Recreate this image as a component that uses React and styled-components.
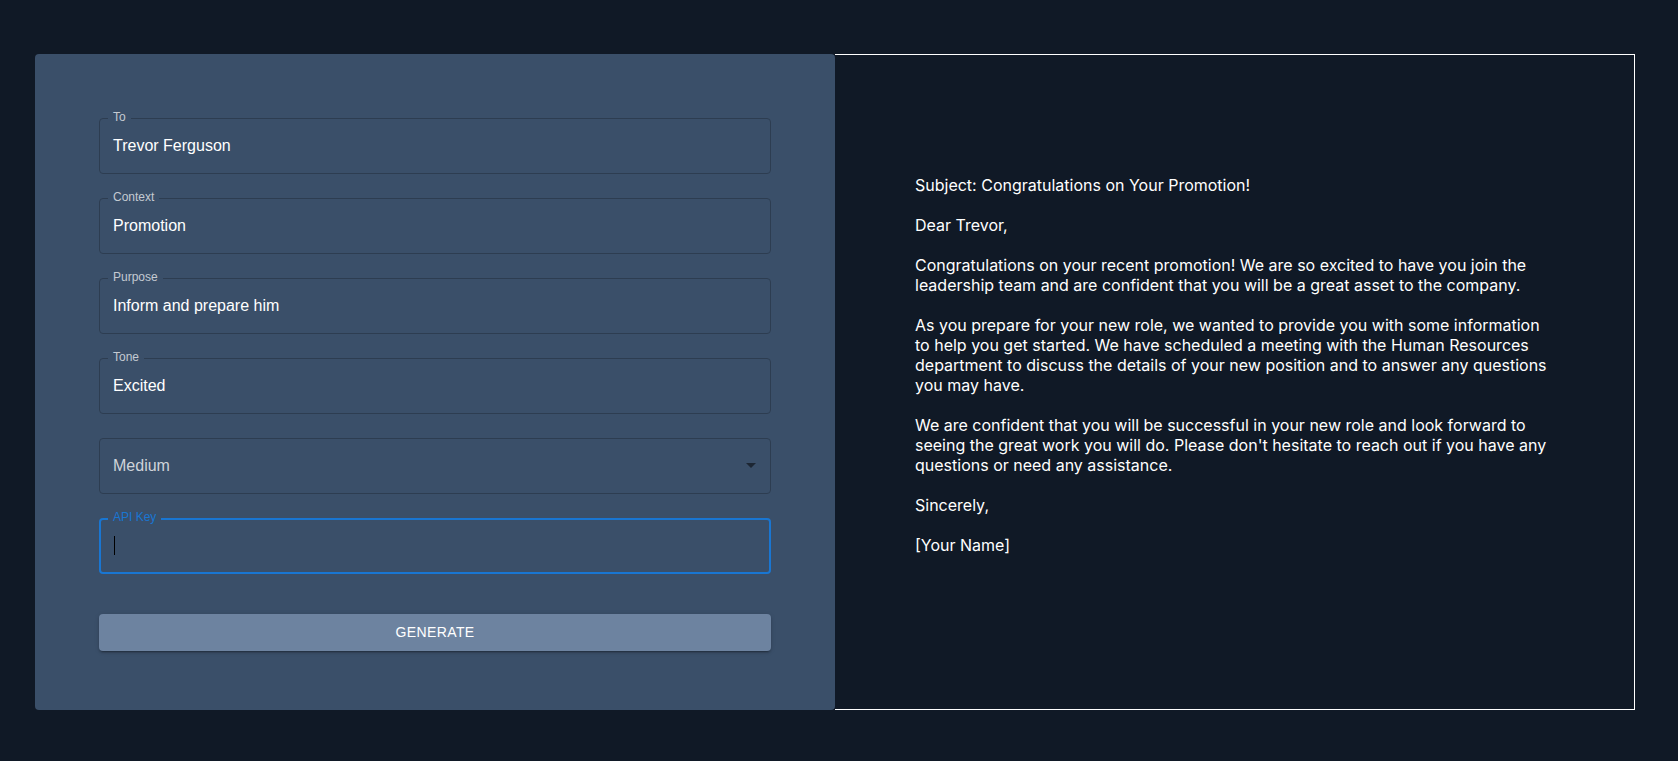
import React from "react";
import styled, { createGlobalStyle } from "styled-components";

const GlobalStyle = createGlobalStyle`
  html, body {
    margin: 0;
    padding: 0;
    background: #101926;
  }
  * { box-sizing: border-box; }
`;

const Page = styled.main`
  display: flex;
  padding: 54px 0 0 35px;
  min-height: 761px;
  background: #101926;
`;

const FormPanel = styled.section`
  width: 800px;
  height: 656px;
  background: #3a4f69;
  border-radius: 4px;
  padding: 64px 64px 0;
  display: flex;
  flex-direction: column;
  position: relative;
  z-index: 1;
  font-family: "Liberation Sans", Helvetica, Arial, sans-serif;
`;

const Fields = styled.div`
  display: flex;
  flex-direction: column;
  gap: 24px;
`;

const Field = styled.div`
  position: relative;
  height: 56px;
  border-radius: 4px;
  border: ${(p) => (p.$focused ? "2px solid #1976d2" : "1px solid #2d3d51")};
  display: flex;
  align-items: center;
  padding: 0 ${(p) => (p.$focused ? "12px" : "13px")} 2px;
`;

const Label = styled.span`
  position: absolute;
  top: ${(p) => (p.$focused ? "-10px" : "-9px")};
  left: ${(p) => (p.$focused ? "7px" : "8px")};
  padding: 0 5px;
  background: #3a4f69;
  font-size: 12px;
  line-height: 14px;
  color: ${(p) => (p.$focused ? "#1976d2" : "#c4cad2")};
`;

const Value = styled.span`
  font-size: 16px;
  line-height: 23px;
  color: ${(p) => (p.$muted ? "#cfd4da" : "#ffffff")};
  flex: 1;
`;

const Caret = styled.span`
  display: block;
  width: 1px;
  height: 19px;
  margin-left: 1px;
  background: #000;
`;

const Arrow = styled.svg`
  width: 24px;
  height: 24px;
  margin-right: -6px;
  fill: #1c2633;
`;

const GenerateButton = styled.button`
  margin-top: 40px;
  height: 36.5px;
  width: 100%;
  border: none;
  border-radius: 4px;
  background: #6d83a0;
  color: #ffffff;
  font-family: "Liberation Sans", Helvetica, Arial, sans-serif;
  font-size: 14px;
  font-weight: 500;
  letter-spacing: 0.4px;
  text-transform: uppercase;
  box-shadow: 0px 3px 1px -2px rgba(0, 0, 0, 0.2),
    0px 2px 2px 0px rgba(0, 0, 0, 0.14), 0px 1px 5px 0px rgba(0, 0, 0, 0.12);
  cursor: pointer;
`;

const OutputPanel = styled.section`
  width: 800px;
  height: 656px;
  border: 1px solid #ffffff;
  border-left: none;
  background: #101926;
  padding: 120px 80px 0 80px;
`;

const Letter = styled.div`
  font-family: Inter, "Noto Sans", sans-serif;
  font-size: 16px;
  line-height: 20px;
  color: #ffffff;
  white-space: pre-line;
`;

const letter = `Subject: Congratulations on Your Promotion!

Dear Trevor,

Congratulations on your recent promotion! We are so excited to have you join the leadership team and are confident that you will be a great asset to the company.

As you prepare for your new role, we wanted to provide you with some information to help you get started. We have scheduled a meeting with the Human Resources department to discuss the details of your new position and to answer any questions you may have.

We are confident that you will be successful in your new role and look forward to seeing the great work you will do. Please don't hesitate to reach out if you have any questions or need any assistance.

Sincerely,

[Your Name]`;

const textFields = [
  { label: "To", value: "Trevor Ferguson" },
  { label: "Context", value: "Promotion" },
  { label: "Purpose", value: "Inform and prepare him" },
  { label: "Tone", value: "Excited" },
];

export default function App() {
  return (
    <>
      <GlobalStyle />
      <Page>
        <FormPanel>
          <Fields>
            {textFields.map((f) => (
              <Field key={f.label}>
                <Label>{f.label}</Label>
                <Value>{f.value}</Value>
              </Field>
            ))}
            <Field>
              <Value $muted>Medium</Value>
              <Arrow viewBox="0 0 24 24">
                <path d="M7 10l5 5 5-5z" />
              </Arrow>
            </Field>
            <Field $focused>
              <Label $focused>API Key</Label>
              <Caret />
            </Field>
          </Fields>
          <GenerateButton>Generate</GenerateButton>
        </FormPanel>
        <OutputPanel>
          <Letter>{letter}</Letter>
        </OutputPanel>
      </Page>
    </>
  );
}
